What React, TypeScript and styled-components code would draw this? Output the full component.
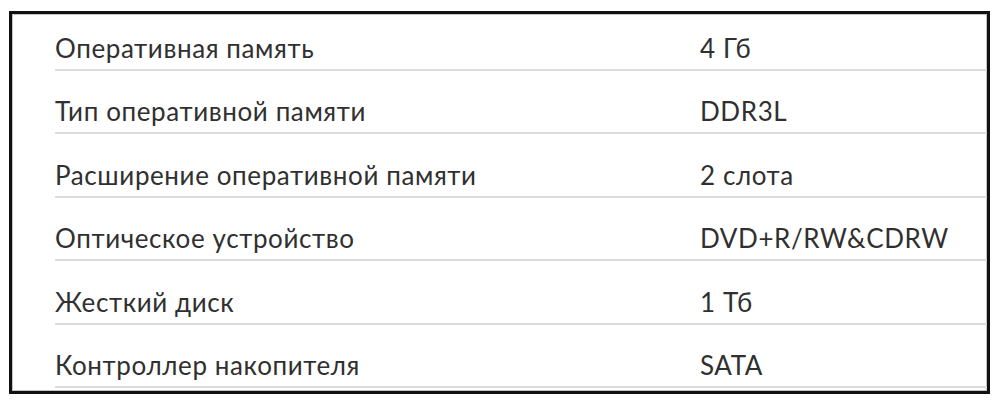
import React from "react";
import styled, { createGlobalStyle } from "styled-components";

const Global = createGlobalStyle`
  html, body { margin: 0; padding: 0; background: #ffffff; }
  body { font-family: Lato, "Open Sans", sans-serif; }
`;

const Frame = styled.div`
  margin: 11px 0 0 9px;
  width: 981px;
  height: 383px;
  box-sizing: border-box;
  border: 3px solid #111;
  box-shadow: inset 0 0 0 1px #c4c4c4;
  background: #fff;
  padding: 0 0 0 43px;
  display: flex;
  flex-direction: column;
`;

const Row = styled.div`
  display: grid;
  grid-template-columns: 645px 1fr;
  align-items: end;
  height: 63.4px;
  flex: none;
  box-sizing: border-box;
  border-bottom: 2px solid #dcdcdc;
  padding-bottom: 6px;
  color: #303030;
  font-size: 26px;
  line-height: 30px;
  letter-spacing: 0.6px;
  &:first-child {
    height: 57px;
  }
`;

const Label = styled.span`
  white-space: nowrap;
`;

const Value = styled.span`
  white-space: nowrap;
`;

const specs: [string, string][] = [
  ["Оперативная память", "4 Гб"],
  ["Тип оперативной памяти", "DDR3L"],
  ["Расширение оперативной памяти", "2 слота"],
  ["Оптическое устройство", "DVD+R/RW&CDRW"],
  ["Жесткий диск", "1 Тб"],
  ["Контроллер накопителя", "SATA"],
];

export default function App() {
  return (
    <>
      <Global />
      <Frame>
        {specs.map(([k, v]) => (
          <Row key={k}>
            <Label>{k}</Label>
            <Value>{v}</Value>
          </Row>
        ))}
      </Frame>
    </>
  );
}
